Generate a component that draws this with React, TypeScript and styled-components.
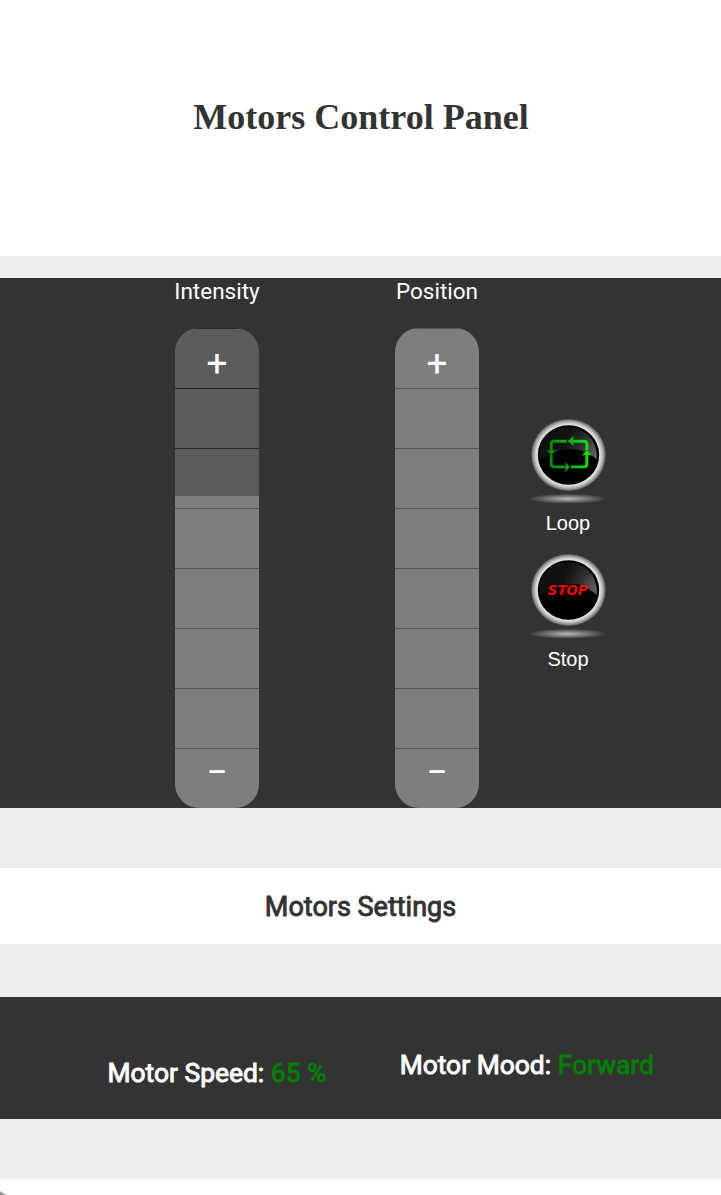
import React from 'react';
import styled, { createGlobalStyle } from 'styled-components';

const GlobalStyle = createGlobalStyle`
  * { box-sizing: border-box; }
  body {
    margin: 0;
    background: #fff;
    color: #333;
    font-family: Roboto, "Liberation Sans", sans-serif;
    overflow: hidden;
  }
  h1, h2, p { margin: 0; }
`;

const Page = styled.main`
  height: 1195px;
  display: flex;
  flex-direction: column;
  overflow: hidden;
`;

const Header = styled.header`
  height: 256px;
  flex: none;
  padding: 97px 0 0 1px;
  text-align: center;
`;

const Title = styled.h1`
  font: bold 36px/41px "Liberation Serif", serif;
`;

const Divider = styled.div<{ $height: number }>`
  height: ${(p) => p.$height}px;
  flex: none;
  background: #eee;
`;

const Controls = styled.section`
  height: 530px;
  flex: none;
  display: flex;
  padding-left: 157px;
  background: #333;
  color: #fff;
`;

const Column = styled.div`
  width: 120px;
  flex: none;
  display: flex;
  flex-direction: column;
  align-items: center;

  & + & {
    margin-left: 100px;
  }
`;

const ColumnLabel = styled.p`
  height: 50px;
  font-size: 22.5px;
  line-height: 26px;
`;

const Track = styled.div<{ $level: number }>`
  width: 84px;
  height: 480px;
  border-radius: 24px;
  overflow: hidden;
  background: linear-gradient(#5c5c5c ${(p) => 100 - p.$level}%, #7e7e7e ${(p) => 100 - p.$level}%);
`;

const Segment = styled.div<{ $dark: boolean }>`
  height: 60px;
  display: flex;
  justify-content: center;
  border-top: 1px solid ${(p) => (p.$dark ? '#26262e' : '#53535e')};
`;

const Sign = styled.span<{ $top: number }>`
  padding-top: ${(p) => p.$top}px;
  font-size: 37px;
  line-height: 42px;
`;

const Actions = styled.div`
  width: 80px;
  flex: none;
  margin: 137px 0 0 31px;
  display: flex;
  flex-direction: column;
  gap: 15px;
`;

const ActionButton = styled.button<{ $labelGap: number }>`
  padding: 0;
  border: 0;
  background: none;
  color: #fff;
  display: flex;
  flex-direction: column;
  align-items: center;
  gap: ${(p) => p.$labelGap}px;
  font: 20px/24px "Liberation Sans", sans-serif;
`;

const Icon = styled.svg`
  width: 80px;
  height: 96px;
  display: block;
  flex: none;
`;

const SettingsBar = styled.section`
  height: 76px;
  flex: none;
  text-align: center;
`;

const Heavy = styled.h2`
  font-size: 27px;
  font-weight: 400;
  line-height: 78px;
  -webkit-text-stroke: 0.9px currentColor;
`;

const StatusBar = styled.section`
  height: 122px;
  flex: none;
  display: flex;
  background: #333;
  color: #fff;
`;

const Status = styled(Heavy)<{ $left: number; $top: number }>`
  margin: ${(p) => p.$top}px 0 0 ${(p) => p.$left}px;
  font-size: 26.4px;
  line-height: 32px;
  white-space: nowrap;
`;

const Value = styled.span`
  color: green;
`;

const Footer = styled.footer`
  flex: 1;
  display: flex;
  align-items: flex-end;
`;

function Slider({ label, level }: { label: string; level: number }) {
  return (
    <Column>
      <ColumnLabel>{label}</ColumnLabel>
      <Track $level={level}>
        {Array.from({ length: 8 }, (_, i) => (
          <Segment key={i} $dark={i * 12.5 < 100 - level}>
            {i === 0 && <Sign $top={14}>+</Sign>}
            {i === 7 && <Sign $top={3}>−</Sign>}
          </Segment>
        ))}
      </Track>
    </Column>
  );
}

function RoundIcon({ id, shine, children }: { id: string; shine: string; children: React.ReactNode }) {
  return (
    <Icon viewBox="0 0 80 96">
      <defs>
        <radialGradient id={`${id}-rim`} cx="50%" cy="50%" r="50%">
          <stop offset="0.82" stopColor="#e6e6e6" />
          <stop offset="0.88" stopColor="#d0d0d0" />
          <stop offset="0.95" stopColor="#929292" />
          <stop offset="1" stopColor="#555" />
        </radialGradient>
        <radialGradient id={`${id}-shadow`}>
          <stop offset="0" stopColor="#b8b8b8" />
          <stop offset="0.5" stopColor="#777" />
          <stop offset="1" stopColor="#333" />
        </radialGradient>
        <radialGradient id={`${id}-shine`} gradientUnits="userSpaceOnUse" cx="70" cy="38" r="36">
          <stop offset="0" stopColor="#686868" />
          <stop offset="0.5" stopColor="#303030" />
          <stop offset="1" stopColor="#111" />
        </radialGradient>
      </defs>
      <ellipse cx="40.5" cy="40" rx="37.3" ry="36" fill={`url(#${id}-rim)`} />
      <ellipse cx="40.5" cy="40" rx="30.7" ry="29.8" fill="#000" />
      <path d={shine} fill={`url(#${id}-shine)`} />
      <ellipse cx="39.5" cy="83.8" rx="39.5" ry="5" fill={`url(#${id}-shadow)`} />
      {children}
    </Icon>
  );
}

export default function App() {
  return (
    <>
      <GlobalStyle />
      <Page>
        <Header>
          <Title>Motors Control Panel</Title>
        </Header>
        <Divider $height={22} />
        <Controls>
          <Slider label="Intensity" level={65} />
          <Slider label="Position" level={100} />
          <Actions>
            <ActionButton $labelGap={0}>
              <RoundIcon
                id="loop"
                shine="M12 44C8 25 23 12.5 40.5 12.5S70 26 69 45C63 39 54 34 41 34C28 35 24 42 12 44Z"
              >
                <defs>
                  <linearGradient id="loop-green" gradientUnits="userSpaceOnUse" x1="18" y1="0" x2="62" y2="0">
                    <stop offset="0" stopColor="#067d06" />
                    <stop offset="0.5" stopColor="#08b40c" />
                    <stop offset="1" stopColor="#0be80b" />
                  </linearGradient>
                </defs>
                <g fill="none" stroke="url(#loop-green)" strokeWidth="2.9">
                  <path d="M38.5 26.3H26Q23.2 26.3 23.2 29V36" />
                  <path d="M23.2 40V49Q23.2 51.9 26 51.9H37" />
                  <path d="M43 51.9H56Q58.8 51.9 58.8 49V39" />
                  <path d="M58.8 35V29Q58.8 26.3 56 26.3H45" />
                </g>
                <g fill="url(#loop-green)">
                  <path d="M39.5 26L46 21L44.5 26L46 31Z" />
                  <path d="M23 40L18 34.8L23 36L28.5 34.8Z" />
                  <path d="M41.8 52L37 57L38 52L37 47Z" />
                  <path d="M59 35L53.5 40.5L59 39.5L63.8 40.5Z" />
                </g>
              </RoundIcon>
              Loop
            </ActionButton>
            <ActionButton $labelGap={1}>
              <RoundIcon
                id="stop"
                shine="M12 44C8 25 23 12.5 40.5 12.5S70 26 69 45L59 38Q54 34 46 34H36C29 36 24 43 12 44Z"
              >
                <text
                  x="39.7"
                  y="44.8"
                  textAnchor="middle"
                  fill="#f00"
                  fontFamily="DejaVu Sans"
                  fontSize="13.3"
                  fontWeight="bold"
                  fontStyle="italic"
                >
                  STOP
                </text>
              </RoundIcon>
              Stop
            </ActionButton>
          </Actions>
        </Controls>
        <Divider $height={60} />
        <SettingsBar>
          <Heavy>Motors Settings</Heavy>
        </SettingsBar>
        <Divider $height={53} />
        <StatusBar>
          <Status $left={107.5} $top={60}>
            Motor Speed: <Value>65 %</Value>
          </Status>
          <Status $left={73.3} $top={52}>
            Motor Mood: <Value>Forward</Value>
          </Status>
        </StatusBar>
        <Divider $height={60} />
        <Footer>
          <svg width="8" height="5" viewBox="0 0 8 5">
            <path d="M0 1Q3 4 8 5H0Z" fill="#999" />
          </svg>
        </Footer>
      </Page>
    </>
  );
}
